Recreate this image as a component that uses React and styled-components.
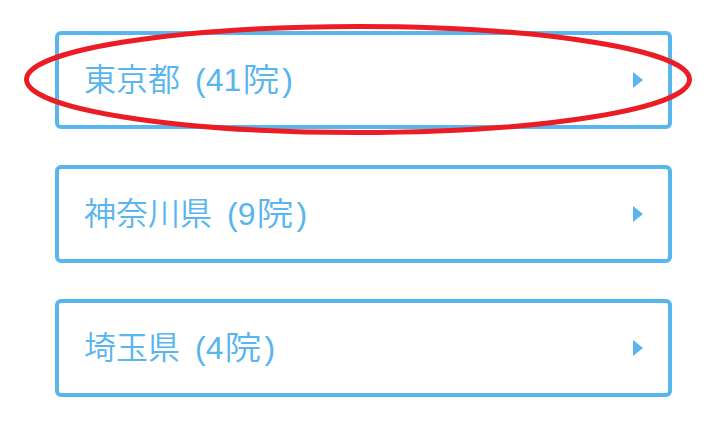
import React from "react";
import styled, { createGlobalStyle } from "styled-components";

const Global = createGlobalStyle`
  html, body { margin: 0; padding: 0; background: #ffffff; }
  body { font-family: "Liberation Sans", "Noto Sans CJK JP", sans-serif; }
`;

const Page = styled.div`
  position: relative;
  width: 724px;
  height: 441px;
  padding: 31px 52px 0 55px;
  box-sizing: border-box;
`;

const List = styled.ul`
  list-style: none;
  margin: 0;
  padding: 0;
  display: flex;
  flex-direction: column;
  gap: 36px;
`;

const Item = styled.li`
  height: 98px;
  box-sizing: border-box;
  border: 4px solid #58b5ee;
  border-radius: 6px;
  display: flex;
  align-items: center;
  justify-content: space-between;
  padding: 0 25px 0 25px;
  color: #58b5ee;
  font-size: 32px;
  line-height: 1;
  background: #fff;
`;

const Label = styled.span`
  display: flex;
  align-items: baseline;
  margin-top: -3px;
`;

const Name = styled.span`
  font-family: "Noto Sans CJK JP", sans-serif;
  font-weight: 350;
`;

const Count = styled.span`
  margin-left: 15px;
  font-family: "Liberation Sans", "Noto Sans CJK JP", sans-serif;
  font-weight: 400;
`;

const Kanji = styled.span`
  display: inline-block;
  margin: 0 5px 0 4px;
  transform: scaleX(1.15);
  font-family: "Noto Sans CJK JP", sans-serif;
  font-weight: 350;
`;

const Arrow = styled.span`
  width: 0;
  height: 0;
  border-top: 8.5px solid transparent;
  border-bottom: 8.5px solid transparent;
  border-left: 10px solid #58b5ee;
`;

const Highlight = styled.svg`
  position: absolute;
  left: 0;
  top: 0;
  pointer-events: none;
`;

const prefectures = [
  { name: "東京都", count: 41 },
  { name: "神奈川県", count: 9 },
  { name: "埼玉県", count: 4 },
];

export default function App() {
  return (
    <>
      <Global />
      <Page>
        <List>
          {prefectures.map((p) => (
            <Item key={p.name}>
              <Label>
                <Name>{p.name}</Name>
                <Count>
                  ({p.count}
                  <Kanji>院</Kanji>)
                </Count>
              </Label>
              <Arrow />
            </Item>
          ))}
        </List>
        <Highlight width="724" height="441" viewBox="0 0 724 441">
          <ellipse
            cx="358"
            cy="79.5"
            rx="331.5"
            ry="53"
            fill="none"
            stroke="#ec1c24"
            strokeWidth="5"
          />
        </Highlight>
      </Page>
    </>
  );
}
